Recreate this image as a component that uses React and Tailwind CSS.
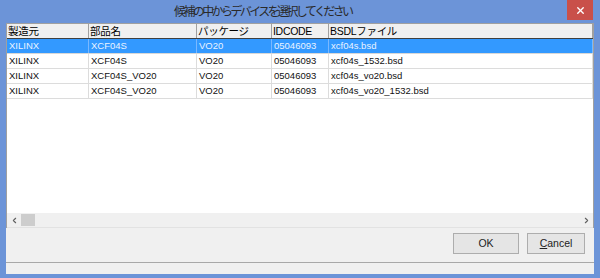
import { X, ChevronLeft, ChevronRight } from "lucide-react";

const COLS = [
  { key: "maker", label: "製造元", w: "w-[82px]" },
  { key: "part", label: "部品名", w: "w-[108px]" },
  { key: "pkg", label: "パッケージ", w: "w-[75px]" },
  { key: "id", label: "IDCODE", w: "w-[57px]" },
  { key: "file", label: "BSDLファイル", w: "flex-1" },
];

const ROWS = [
  { maker: "XILINX", part: "XCF04S", pkg: "VO20", id: "05046093", file: "xcf04s.bsd" },
  { maker: "XILINX", part: "XCF04S", pkg: "VO20", id: "05046093", file: "xcf04s_1532.bsd" },
  { maker: "XILINX", part: "XCF04S_VO20", pkg: "VO20", id: "05046093", file: "xcf04s_vo20.bsd" },
  { maker: "XILINX", part: "XCF04S_VO20", pkg: "VO20", id: "05046093", file: "xcf04s_vo20_1532.bsd" },
];

const font = "font-['Liberation_Sans','Noto_Sans_CJK_JP',sans-serif]";

const App = () => {
  return (
    <div className={`flex h-[278px] w-[600px] flex-col bg-[#6c94d8] ${font}`}>
      {/* title bar */}
      <div className="relative flex h-[23px] items-center pl-[174px]">
        <span className="text-[12px] tracking-[-2.6px] text-[#2a2a2a]">候補の中からデバイスを選択してください</span>
        <button className="absolute right-[7px] top-0 flex h-[20px] w-[26px] items-center justify-center bg-[#c9504a] text-white">
          <X size={11} strokeWidth={3} />
        </button>
      </div>

      {/* client area */}
      <div className="mx-[6px] mb-[4px] flex flex-1 flex-col bg-[#f0f0f0]">
        <div className="flex h-[205px] flex-col border-l border-r border-t border-[#a0a0a0] bg-white">
          <div className="flex h-[15px] border-b border-[#404040] bg-[#f0f0f0] text-[10.5px] leading-[14px] text-black">
            {COLS.map((c) => (
              <div key={c.key} className={`${c.w} border-r border-[#a0a0a0] pl-[1px] tracking-[-0.3px]`}>
                {c.label}
              </div>
            ))}
          </div>
          {ROWS.map((r, i) => (
            <div
              key={i}
              className={`flex h-[15px] border-b text-[9.5px] leading-[14px] ${
                i === 0 ? "border-[#d8d8d8] bg-[#3399ff] text-[#eaf3ff]" : "border-[#dcdcdc] text-[#111]"
              }`}
            >
              {COLS.map((c) => (
                <div
                  key={c.key}
                  className={`${c.w} border-r pl-[2px] ${i === 0 ? "border-[#7ab8ff]" : "border-[#dcdcdc]"}`}
                >
                  {r[c.key]}
                </div>
              ))}
            </div>
          ))}
          <div className="flex-1" />
          <div className="flex h-[15px] items-center border-b border-[#e2e2e2] bg-[#f0f0f0] text-[#606060]">
            <div className="flex w-[14px] items-center justify-center">
              <ChevronLeft size={9} strokeWidth={3} />
            </div>
            <div className="h-[12px] w-[14px] bg-[#cdcdcd]" />
            <div className="flex-1" />
            <div className="flex w-[14px] items-center justify-center">
              <ChevronRight size={9} strokeWidth={3} />
            </div>
          </div>
        </div>

        <div className="flex justify-end gap-[8px] pr-[9px] pt-[5px]">
          <button className="h-[21px] w-[66px] border border-[#adadad] bg-[#e5e5e5] text-[10.5px] text-[#222]">OK</button>
          <button className="h-[21px] w-[58px] border border-[#adadad] bg-[#e5e5e5] text-[10.5px] text-[#222]">
            <span className="underline">C</span>ancel
          </button>
        </div>
        <div className="mt-[8px] border-t border-[#a8a8a8]" />
      </div>
    </div>
  );
};

export default App;
